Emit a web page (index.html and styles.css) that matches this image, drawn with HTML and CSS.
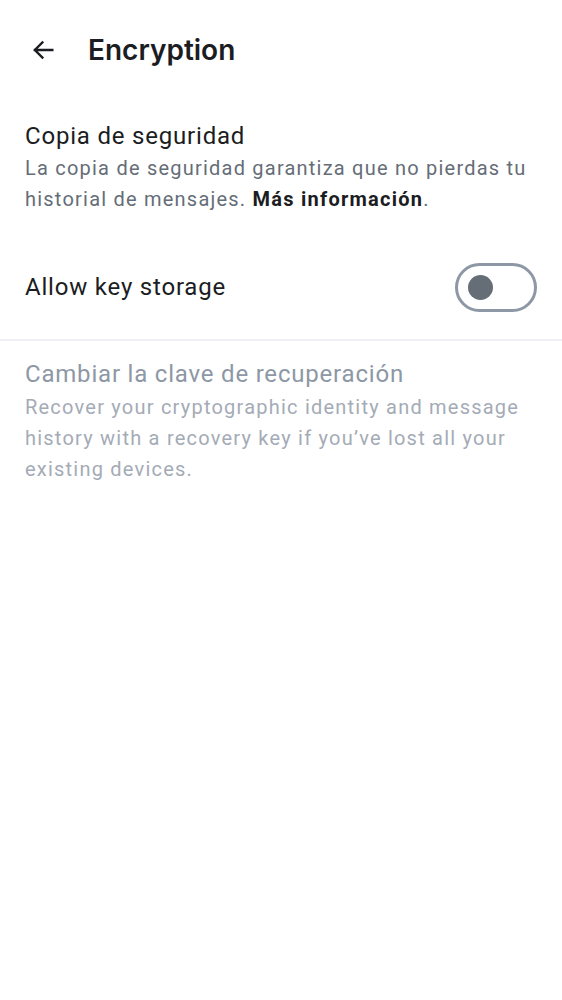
FILE: index.html
```html
<!DOCTYPE html>
<html>
<head>
<meta charset="utf-8">
<link rel="stylesheet" href="styles.css">
</head>
<body>
<header class="topbar">
  <button class="back" aria-label="Back">
    <svg width="28" height="28" viewBox="0 0 24 24"><path d="M20 12H5M11.5 5.5L5 12l6.5 6.5" fill="none" stroke="#1b1d22" stroke-width="2" stroke-linecap="square" stroke-linejoin="miter"/></svg>
  </button>
  <h1 class="title">Encryption</h1>
</header>
<section class="item">
  <div class="item-title">Copia de seguridad</div>
  <div class="item-desc">La copia de seguridad garantiza que no pierdas tu historial de mensajes. <b>Más información</b>.</div>
</section>
<section class="row">
  <div class="item-title">Allow key storage</div>
  <div class="toggle"><div class="knob"></div></div>
</section>
<div class="divider"></div>
<section class="item disabled">
  <div class="item-title">Cambiar la clave de recuperación</div>
  <div class="item-desc">Recover your cryptographic identity and message history with a recovery key if you’ve lost all your existing devices.</div>
</section>
</body>
</html>
```
FILE: styles.css
```css
html, body { margin: 0; padding: 0; background: #fff; }
body { font-family: Roboto, "Noto Sans", sans-serif; color: #1b1d22; width: 562px; }
.topbar { display: flex; align-items: center; height: 100px; padding-left: 29px; }
.back { border: 0; background: none; padding: 0; width: 28px; height: 28px; display: flex; }
.title { margin: 0 0 0 31px; font-family: Inter, sans-serif; font-weight: 600; font-size: 28px; letter-spacing: 0; color: #1b1d22; }
.item { padding: 21px 25px 0 25px; }
.item-title { font-size: 24px; line-height: 30px; color: #1b1d22; letter-spacing: 0.8px; }
.item-desc { font-size: 20px; line-height: 31px; color: #656d77; letter-spacing: 1.22px; margin-top: 2px; }
.item-desc b { color: #1b1d22; font-weight: 700; letter-spacing: 1.25px; }
.row { display: flex; align-items: center; justify-content: space-between; padding: 0 25px; height: 98px; margin-top: 23px; box-sizing: border-box; }
.toggle { width: 82px; height: 49px; box-sizing: border-box; border: 3px solid #8d97a5; border-radius: 25px; display: flex; align-items: center; padding-left: 10px; }
.knob { width: 25px; height: 25px; border-radius: 50%; background: #656d77; }
.divider { height: 2px; background: #eef0f4; margin-top: 3px; }
.item.disabled { padding-top: 18px; }
.disabled .item-title { color: #8d97a5; }
.disabled .item-desc { color: #a4abb6; margin-top: 3px; }
```
